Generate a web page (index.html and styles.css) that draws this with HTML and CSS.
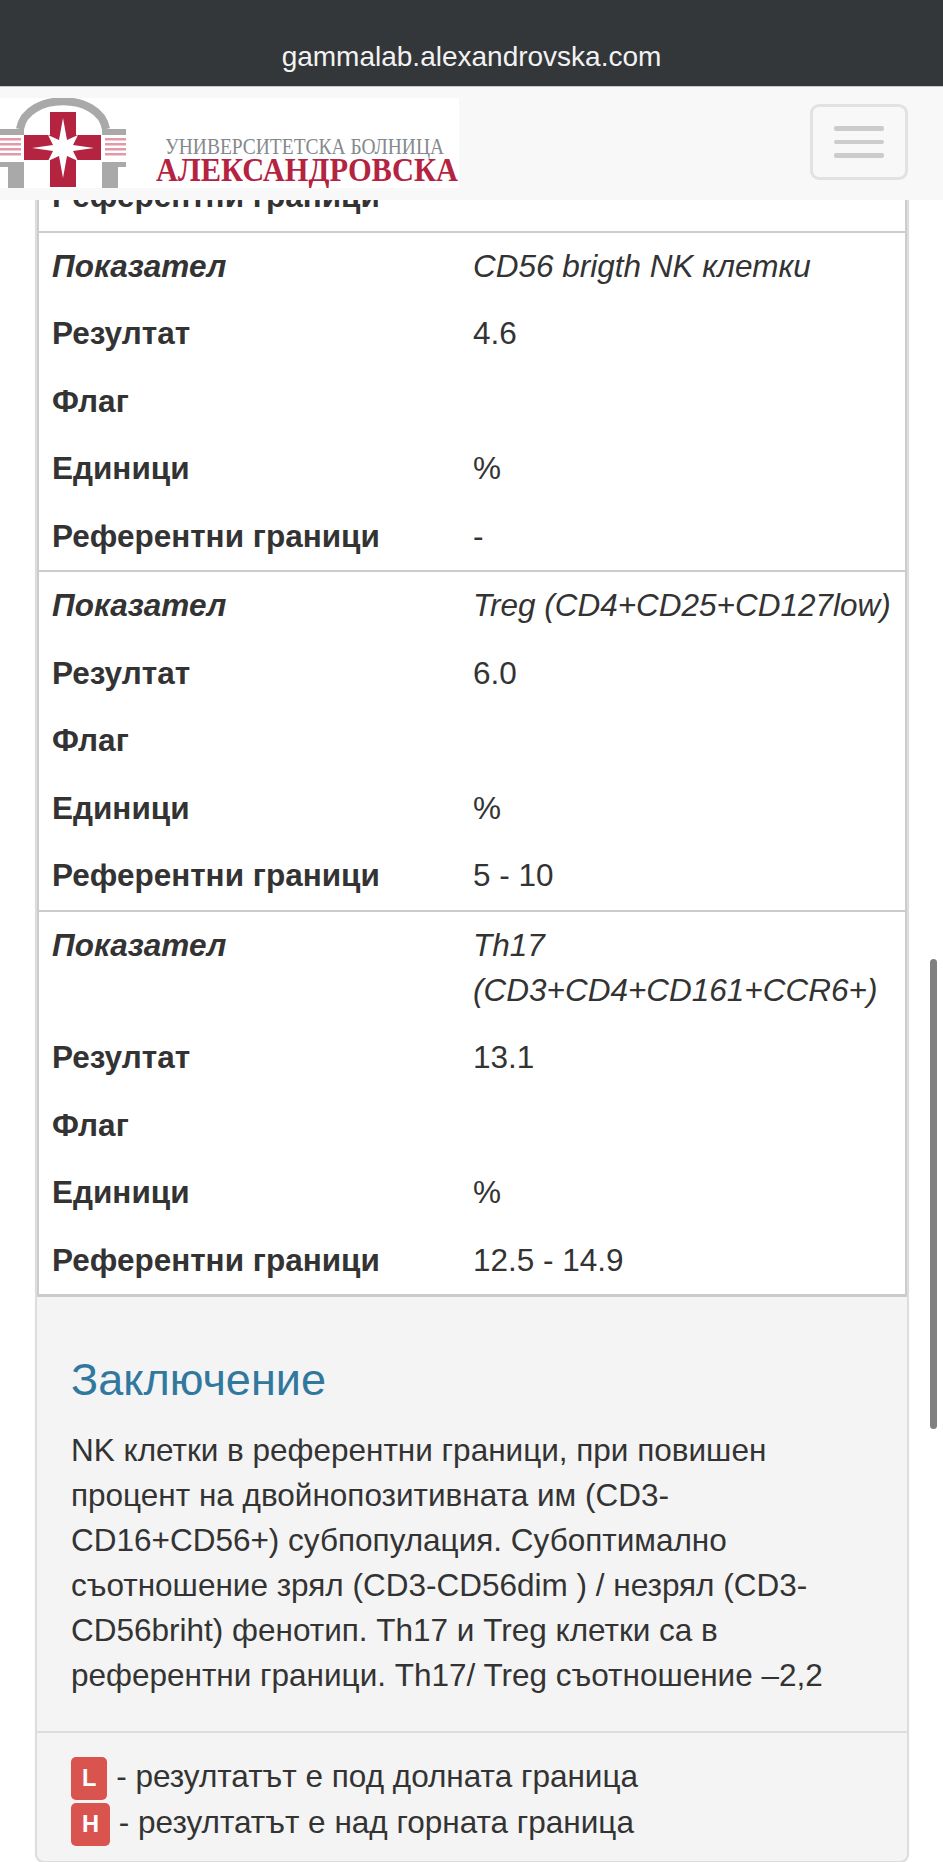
FILE: index.html
```html
<!DOCTYPE html>
<html lang="bg">
<head>
<meta charset="utf-8">
<title>gammalab.alexandrovska.com</title>
<link rel="stylesheet" href="styles.css">
</head>
<body>
<header class="top">
  <div class="statusbar">gammalab.alexandrovska.com</div>
  <nav class="navbar">
    <svg class="logo" width="459" height="90" viewBox="0 0 459 90" role="img" aria-label="Университетска болница Александровска">
      <rect width="459" height="90" fill="#fff"/>
      <path d="M20 31 C26 -6 100 -6 106 31" fill="none" stroke="#a9a9a9" stroke-width="8"/>
      <rect x="0" y="31" width="24" height="6" fill="#a9a9a9"/>
      <rect x="102" y="31" width="24" height="6" fill="#a9a9a9"/>
      <g fill="#e39aa8">
        <rect x="0" y="40" width="21" height="2.5"/><rect x="0" y="45" width="21" height="2.5"/><rect x="0" y="50" width="21" height="2.5"/><rect x="0" y="55" width="21" height="2.5"/>
        <rect x="105" y="40" width="21" height="2.5"/><rect x="105" y="45" width="21" height="2.5"/><rect x="105" y="50" width="21" height="2.5"/><rect x="105" y="55" width="21" height="2.5"/>
      </g>
      <path d="M0 64H24V90H8V69H0Z" fill="#a9a9a9"/>
      <path d="M102 64H126V69H118V90H102Z" fill="#a9a9a9"/>
      <path d="M50 14H76V37H101V62H76V89H50V62H24V37H50Z" fill="#b4233f"/>
      <path d="M63 20L67 42L78 37L73 47L94 50L73 53L78 63L67 58L63 80L59 58L48 63L53 53L32 50L53 47L48 37L59 42Z" fill="#fff"/>
      <text class="logo-top" x="165" y="56" textLength="279" lengthAdjust="spacingAndGlyphs">УНИВЕРСИТЕТСКА БОЛНИЦА</text>
      <text class="logo-main" x="156" y="83" textLength="302" lengthAdjust="spacingAndGlyphs">АЛЕКСАНДРОВСКА</text>
    </svg>
    <button class="toggle" type="button" aria-label="Меню">
      <span class="toggle-bar"></span><span class="toggle-bar"></span><span class="toggle-bar"></span>
    </button>
  </nav>
</header>

<main class="page">
  <section class="panel">
    <table class="results">
      <tbody>
        <tr><th>Референтни граници</th><td>-</td></tr>
      </tbody>
      <tbody>
        <tr class="name"><th>Показател</th><td>CD56 brigth NK клетки</td></tr>
        <tr><th>Резултат</th><td>4.6</td></tr>
        <tr><th>Флаг</th><td></td></tr>
        <tr><th>Единици</th><td>%</td></tr>
        <tr><th>Референтни граници</th><td>-</td></tr>
      </tbody>
      <tbody>
        <tr class="name"><th>Показател</th><td>Treg (CD4+CD25+CD127low)</td></tr>
        <tr><th>Резултат</th><td>6.0</td></tr>
        <tr><th>Флаг</th><td></td></tr>
        <tr><th>Единици</th><td>%</td></tr>
        <tr><th>Референтни граници</th><td>5 - 10</td></tr>
      </tbody>
      <tbody>
        <tr class="name"><th>Показател</th><td>Th17 (CD3+CD4+CD161+CCR6+)</td></tr>
        <tr><th>Резултат</th><td>13.1</td></tr>
        <tr><th>Флаг</th><td></td></tr>
        <tr><th>Единици</th><td>%</td></tr>
        <tr><th>Референтни граници</th><td>12.5 - 14.9</td></tr>
      </tbody>
    </table>
    <div class="panel-body">
      <h3 class="panel-title">Заключение</h3>
      <p class="conclusion">NK клетки в референтни граници, при повишен процент на двойнопозитивната им (CD3-CD16+CD56+) субпопулация. Субоптимално съотношение зрял (CD3-CD56dim ) / незрял (CD3-CD56briht) фенотип. Th17 и Treg клетки са в референтни граници. Th17/ Treg съотношение –2,2</p>
    </div>
    <div class="panel-footer">
      <div><span class="badge">L</span> - резултатът е под долната граница</div>
      <div><span class="badge">H</span> - резултатът е над горната граница</div>
    </div>
  </section>
</main>

<div class="scrollbar"></div>
</body>
</html>
```

FILE: styles.css
```css
* { box-sizing: border-box; }

html, body {
  margin: 0;
  height: 1862px;
  overflow: hidden;
  background: #fff;
}

body {
  font-family: "Liberation Sans", Arial, sans-serif;
  font-size: 31.5px;
  line-height: 45px;
  color: #333;
}

.top {
  position: fixed;
  top: 0;
  left: 0;
  right: 0;
  z-index: 10;
}

.statusbar {
  height: 86px;
  padding-top: 35px;
  background: #33373a;
  color: #f2f2f2;
  font-size: 28px;
  line-height: 44px;
  text-align: center;
}

.navbar {
  height: 114px;
  padding-top: 11px;
  background: #f8f8f8;
  border-top: 1px solid #c9c9c9;
  display: flex;
  justify-content: space-between;
  align-items: flex-start;
}

.logo { display: block; }

.logo-top {
  font-family: "Liberation Serif", serif;
  font-size: 23px;
  fill: #85898d;
}

.logo-main {
  font-family: "Liberation Serif", serif;
  font-size: 33px;
  font-weight: 700;
  fill: #b4233f;
}

.toggle {
  width: 98px;
  height: 76px;
  margin: 6px 35px 0 0;
  padding: 0;
  background: transparent;
  border: 3px solid #e2e2e2;
  border-radius: 9px;
  display: flex;
  flex-direction: column;
  align-items: center;
  justify-content: center;
  gap: 9px;
}

.toggle-bar {
  width: 50px;
  height: 4.5px;
  border-radius: 2px;
  background: #ccc;
}

.page {
  padding: 163px 34px 0 35px;
}

.panel {
  background: #f4f4f4;
  border: 2px solid #ddd;
  border-top: 0;
  border-radius: 0 0 9px 9px;
  box-shadow: 0 1px 2px rgba(0, 0, 0, 0.05);
}

.results {
  width: 100%;
  table-layout: fixed;
  border-collapse: separate;
  border-spacing: 0;
  background: #fff;
  border: 2px solid #ccc;
  border-top: 0;
  border-bottom-width: 3px;
}

.results th,
.results td {
  padding: 11.25px 11px;
  text-align: left;
  vertical-align: top;
}

.results th {
  width: 423px;
  font-weight: 700;
  padding-left: 13px;
}

.results td { font-weight: 400; }

.results tbody + tbody tr:first-child th,
.results tbody + tbody tr:first-child td {
  border-top: 2px solid #ccc;
}

.name th,
.name td { font-style: italic; }

.panel-body {
  padding: 60px 34px 33px;
}

.panel-title {
  margin: 0 0 26px;
  font-size: 45px;
  font-weight: 400;
  line-height: 45px;
  color: #31789f;
}

.conclusion { margin: 0; }

.panel-footer {
  padding: 21px 34px 15px;
  border-top: 2px solid #ddd;
}

.badge {
  display: inline-block;
  height: 43px;
  padding: 0 11px;
  vertical-align: middle;
  background: #d9534f;
  border-radius: 5px;
  color: #fff;
  font-size: 23.6px;
  font-weight: 700;
  line-height: 43px;
}

.scrollbar {
  position: fixed;
  top: 959px;
  left: 930px;
  width: 7px;
  height: 470px;
  border-radius: 4px;
  background: #808080;
}
```
